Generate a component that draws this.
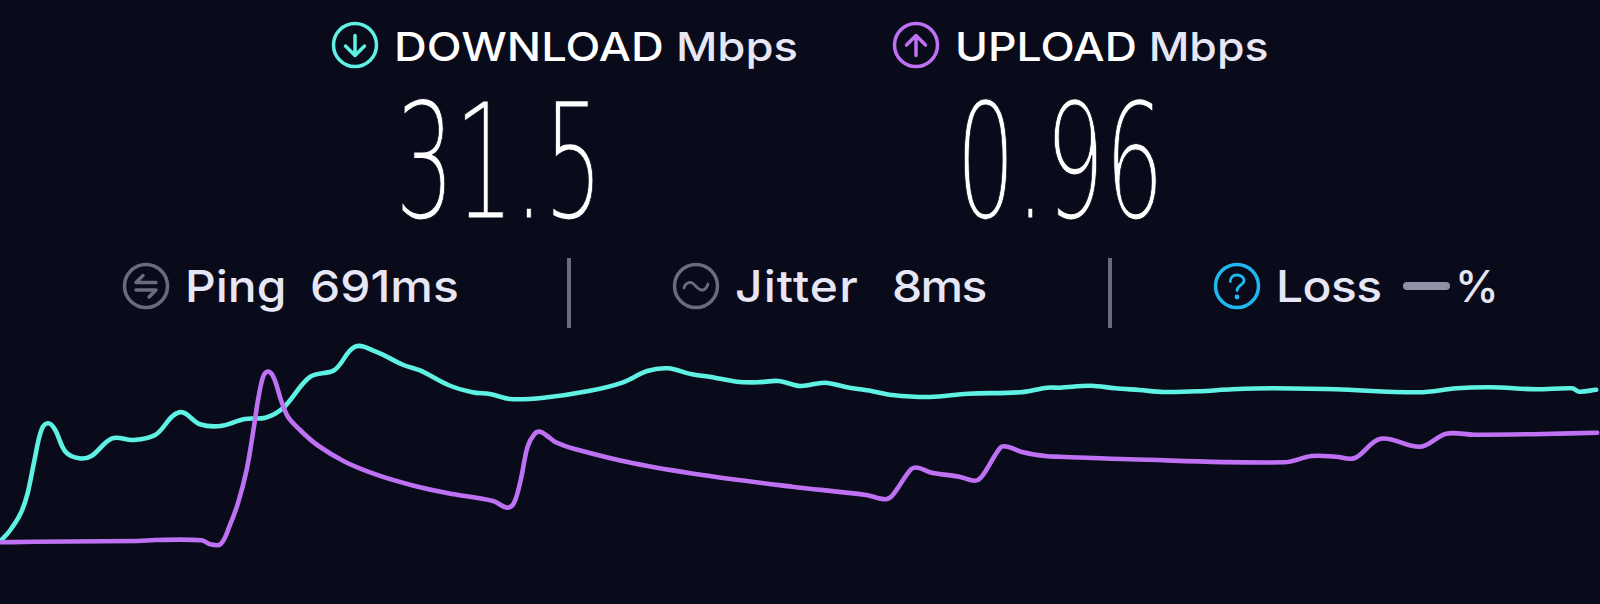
<script>
	// trace samples: [origin x, origin y, [x, y] pairs at 2.9 / 3 px per unit]
	const scan = (ox, oy, pts) => pts.map(([x, y]) => [ox + x / 2.9, oy + y / 3]);

	const download = [
		...scan(0, 330, [[0,635],[30,600],[60,550],[80,490],[100,390],[120,300],[140,280],[160,300],[190,365],[230,385],[265,378],[325,325],[385,330],[450,315],[520,247],[580,283],[640,288],[710,267],[770,263],[820,235],[900,140],[970,120],[1030,50],[1090,65],[1170,105],[1220,122],[1300,165],[1370,187],[1420,192],[1480,207]]),
		...scan(530, 330, [[40,203],[170,183],[270,157],[340,123],[400,115],[470,133],[520,140],[600,155],[660,157],[720,153],[785,168],[855,158],[920,172],[990,183],[1050,195],[1160,201],[1270,191],[1420,187],[1500,173]]),
		...scan(1060, 350, [[0,113],[90,107],[160,115],[230,120],[300,126],[400,124],[500,118],[620,115],[800,118],[1040,127],[1150,115],[1250,112],[1380,118],[1485,115],[1505,125],[1555,119]])
	];
	const upload = [
		...scan(0, 330, [[0,637],[100,635],[400,633],[450,630],[585,631],[610,643],[640,642],[665,590],[690,520],[715,420],[735,300],[750,200],[765,135],[780,125],[795,145],[815,210],[835,260],[870,300],[920,345],[1000,395],[1100,437],[1200,467],[1300,490],[1430,513],[1470,533],[1490,520],[1510,450],[1530,350],[1550,312]]),
		...scan(530, 330, [[30,305],[50,318],[75,337],[130,357],[300,400],[500,435],[760,470],[975,495],[1030,508],[1050,497],[1105,418],[1125,413],[1165,428],[1245,440],[1290,452],[1310,440],[1365,352],[1385,350],[1430,367],[1500,379]]),
		...scan(1060, 350, [[0,320],[200,328],[650,337],[730,318],[800,320],[855,324],[930,266],[1045,290],[1120,251],[1200,254],[1400,252],[1558,248]])
	];

	// unit tangent at sample i, handles sized by segment so long gaps don't overshoot
	function tangent(p, i) {
		const a = p[i - 1] || p[i], c = p[i + 1] || p[i];
		const dx = c[0] - a[0], dy = c[1] - a[1], len = Math.hypot(dx, dy) || 1;
		return [dx / len, dy / len];
	}
	function smooth(p) {
		let d = `M${p[0][0].toFixed(1)} ${p[0][1].toFixed(1)}`;
		for (let i = 0; i < p.length - 1; i++) {
			const b = p[i], c = p[i + 1], h = Math.hypot(c[0] - b[0], c[1] - b[1]) / 3;
			const t0 = tangent(p, i), t1 = tangent(p, i + 1);
			d += `C${(b[0] + t0[0] * h).toFixed(1)} ${(b[1] + t0[1] * h).toFixed(1)} ${(c[0] - t1[0] * h).toFixed(1)} ${(c[1] - t1[1] * h).toFixed(1)} ${c[0].toFixed(1)} ${c[1].toFixed(1)}`;
		}
		return d;
	}
</script>

<main>
	<section class="speeds">
		<div class="speed">
			<svg class="icon teal" viewBox="0 0 48 48">
				<circle cx="24" cy="24" r="21.5" />
				<path d="M24 14.500V34.500M14.500 25L24 34.500L33.500 25" />
			</svg>
			<div>
				<div class="label">DOWNLOAD <span class="unit">Mbps</span></div>
				<div class="value"><span>31.5</span></div>
			</div>
		</div>
		<div class="speed">
			<svg class="icon purple" viewBox="0 0 48 48">
				<circle cx="24" cy="24" r="21.5" />
				<path d="M24 34.500V14.500M14.500 24L24 14.500L33.500 24" />
			</svg>
			<div>
				<div class="label upload">UPLOAD <span class="unit">Mbps</span></div>
				<div class="value"><span>0.96</span></div>
			</div>
		</div>
	</section>

	<section class="stats">
		<div class="stat ping">
			<svg class="icon grey" viewBox="0 0 48 48">
				<circle cx="24" cy="24" r="21.5" />
				<path d="M34 20.500H14L21 13.500M14 28H34L27 35" />
			</svg>
			<span class="name">Ping</span>
			<span class="num">691ms</span>
		</div>
		<div class="stat jitter">
			<svg class="icon grey" viewBox="0 0 48 48">
				<circle cx="24" cy="24" r="21.5" />
				<path class="fine" d="M12 26C13 21 18 19 21 21.500C24 24 27 29 31 28C34 27.500 35 25 36 22" />
			</svg>
			<span class="name">Jitter</span>
			<span class="num">8ms</span>
		</div>
		<div class="stat loss">
			<svg class="icon blue" viewBox="0 0 48 48">
				<circle cx="24" cy="24" r="21.5" />
				<path class="fine" d="M17.300 19.500C17.300 15.500 20 13 24 13C28 13 31 15.500 31 18.500C31 23 24 23.500 24 28.500" />
				<circle class="dot" cx="24" cy="35" r="2.400" />
			</svg>
			<span class="name">Loss</span>
			<i class="dash"></i>
			<span class="pct">%</span>
		</div>
	</section>

	<svg class="chart" viewBox="0 340 1600 264">
		<path d={smooth(download)} stroke="#5ff2e4" />
		<path d={smooth(upload)} stroke="#bf71f4" />
	</svg>
</main>

<style>
	:global(body) {
		background: #0a0b1a;
	}
	main {
		width: 1600px;
		height: 604px;
		overflow: hidden;
		font-family: Inter, "Liberation Sans", sans-serif;
		color: #e6e6f5;
	}
	.icon {
		width: 48px;
		height: 48px;
		flex: none;
		fill: none;
		stroke-width: 3.5;
		stroke-linecap: round;
		stroke-linejoin: round;
	}
	.teal { stroke: #5ff2e4; }
	.purple { stroke: #bf71f4; }
	.grey { stroke: #6a6b7f; }
	.blue { stroke: #1fb8f0; }
	.fine { stroke-width: 2.8; }
	.dot {
		fill: #1fb8f0;
		stroke: none;
	}
	.speeds {
		display: flex;
		padding: 21px 0 0 331px;
		height: 237px;
		box-sizing: border-box;
	}
	.speed {
		display: flex;
		gap: 15px;
		width: 561px;
	}
	.label {
		margin-top: 2px;
		font-size: 40px;
		font-weight: 500;
		line-height: 48px;
		color: #fff;
		white-space: nowrap;
		transform: scaleX(1.136);
		transform-origin: left center;
	}
	.label.upload {
		transform: scaleX(1.114);
	}
	.unit {
		color: #e6e6f5;
	}
	.value {
		height: 140px;
		line-height: 140px;
		margin-top: 22px;
		padding-left: 1px;
		color: #fff;
		font-family: "DejaVu Sans", sans-serif;
		font-weight: 200;
		font-size: 160px;
	}
	.value span {
		display: inline-block;
		transform: scaleX(0.585);
		transform-origin: left center;
		/* background-coloured outline thins the glyphs down to the hairline look */
		-webkit-text-stroke: 1.2px #0a0b1a;
	}
	.stats {
		display: flex;
		margin-top: 21px;
		font-size: 44px;
		font-weight: 530;
	}
	.stat {
		display: flex;
		align-items: center;
		height: 70px;
		padding-bottom: 14px;
		box-sizing: border-box;
		white-space: nowrap;
	}
	.ping {
		width: 571px;
		padding-left: 122px;
		border-right: 4px solid #6a6b7f;
	}
	.jitter {
		width: 541px;
		padding-left: 101px;
		border-right: 4px solid #6a6b7f;
	}
	.loss {
		padding-left: 101px;
	}
	.name,
	.num {
		display: inline-block;
		transform: scaleX(1.09);
		transform-origin: left center;
	}
	.name {
		margin-left: 15px;
	}
	.ping .name {
		width: 125px;
	}
	.loss .name {
		width: 127px;
		letter-spacing: -0.5px;
	}
	.jitter .name {
		width: 157px;
		letter-spacing: 1px;
	}
	.jitter .num {
		letter-spacing: -1.5px;
	}
	.dash {
		width: 47px;
		height: 8px;
		border-radius: 4px;
		background: #8f91a6;
		margin-right: 5px;
	}
	.chart {
		display: block;
		width: 1600px;
		height: 264px;
		margin-top: 12px;
		fill: none;
		stroke-width: 4.6;
		stroke-linecap: round;
		stroke-linejoin: round;
	}
</style>
